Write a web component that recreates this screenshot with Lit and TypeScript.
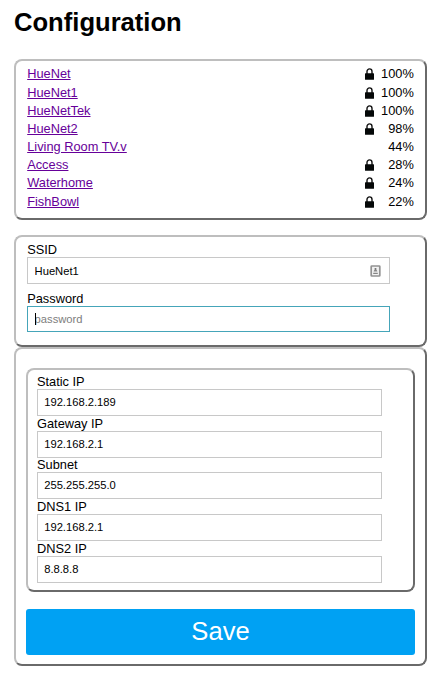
import { LitElement, html, css, svg, nothing } from "lit";
import { customElement } from "lit/decorators.js";

interface Network {
  name: string;
  locked: boolean;
  quality: number;
}

const networks: Network[] = [
  { name: "HueNet", locked: true, quality: 100 },
  { name: "HueNet1", locked: true, quality: 100 },
  { name: "HueNetTek", locked: true, quality: 100 },
  { name: "HueNet2", locked: true, quality: 98 },
  { name: "Living Room TV.v", locked: false, quality: 44 },
  { name: "Access", locked: true, quality: 28 },
  { name: "Waterhome", locked: true, quality: 24 },
  { name: "FishBowl", locked: true, quality: 22 },
];

const addresses = [
  ["Static IP", "192.168.2.189"],
  ["Gateway IP", "192.168.2.1"],
  ["Subnet", "255.255.255.0"],
  ["DNS1 IP", "192.168.2.1"],
  ["DNS2 IP", "8.8.8.8"],
];

@customElement("app-root")
export class AppRoot extends LitElement {
  static styles = css`
    :host {
      display: block;
      box-sizing: border-box;
      width: 446px;
      height: 675px;
      padding: 7px 19px 0 14px;
      background: #fff;
      color: #000;
      font: 12.8px/15px "Liberation Sans", Arial, sans-serif;
      overflow: hidden;
    }
    * {
      box-sizing: border-box;
    }
    h1 {
      margin: 0 0 22px;
      font-size: 25.6px;
      line-height: 30px;
    }
    .panel {
      border: 2px solid;
      border-color: #bebebe #6a6a6a #6a6a6a #bebebe;
      border-radius: 8px;
    }
    .networks {
      height: 161px;
      padding: 3.75px 11.2px 0 11.2px;
      margin-bottom: 15px;
    }
    .network {
      display: flex;
      align-items: center;
      height: 18.19px;
    }
    .network a {
      flex: 1;
      color: #660099;
      text-decoration: underline;
    }
    .lock {
      width: 11px;
      height: 12px;
      display: block;
      margin-top: 1px;
    }
    .quality {
      width: 39px;
      text-align: right;
    }
    .wifi {
      height: 112px;
      padding: 5px 35px 0 11px;
    }
    .wifi .field {
      height: 49px;
    }
    .field label {
      display: block;
      height: 15px;
    }
    .wifi label {
      padding-left: 0.2px;
    }
    .box {
      position: relative;
    }
    input {
      display: block;
      width: 100%;
      height: 27px;
      margin: 0;
      padding: 1px 6.6px 0;
      border: 1px solid #c8c8c8;
      border-radius: 0;
      outline: none;
      background: #fff;
      color: #000;
      font: 11.2px "Liberation Sans", Arial, sans-serif;
    }
    input::placeholder {
      color: #7d7d7d;
      opacity: 1;
    }
    .active input {
      height: 26px;
      padding: 0 6.6px 1px;
      border-color: #45a5b9;
    }
    .caret {
      position: absolute;
      left: 8px;
      top: 7px;
      width: 1px;
      height: 12px;
      background: #000;
    }
    .contact {
      position: absolute;
      right: 9px;
      top: 8px;
      width: 11px;
      height: 12px;
    }
    .static {
      height: 319px;
      padding: 19px 10px 0;
    }
    .addresses {
      height: 224px;
      padding: 4px 31px 0 9px;
      margin-bottom: 17px;
    }
    .addresses .field {
      height: 41.7px;
    }
    .addresses input {
      padding: 0 6.2px 1px;
    }
    button {
      display: block;
      width: 100%;
      height: 46px;
      padding: 0 0 2px;
      border: 0;
      border-radius: 3px;
      background: #00a1f3;
      color: #fff;
      font: 25.6px "Liberation Sans", Arial, sans-serif;
    }
  `;

  private lockIcon() {
    return svg`<svg class="lock" viewBox="0 0 11 12">
      <path d="M3 6V3.4a2.5 2.5 0 0 1 5 0V6" fill="none" stroke="#111" stroke-width="1.4"/>
      <rect x="1" y="5.2" width="9" height="6.5" rx=".5" fill="#050808"/>
    </svg>`;
  }

  render() {
    return html`
      <h1>Configuration</h1>
      <div class="panel networks">
        ${networks.map(
          (n) => html`<div class="network">
            <a>${n.name}</a>
            ${n.locked ? this.lockIcon() : nothing}
            <span class="quality">${n.quality}%</span>
          </div>`
        )}
      </div>
      <div class="panel wifi">
        <div class="field">
          <label>SSID</label>
          <div class="box">
            <input .value=${"HueNet1"} />
            <svg class="contact" viewBox="0 0 11 12">
              <rect x="1.2" y="1" width="8.6" height="10" rx=".6" fill="#f2f2f2" stroke="#929292" stroke-width="1.7"/>
              <circle cx="5.5" cy="4" r="1.1" fill="#707070"/>
              <path d="M3.6 6.6q0-1.8 1.9-1.8t1.9 1.8zM3.2 7.8h4.6v1.2H3.2z" fill="#858585"/>
            </svg>
          </div>
        </div>
        <div class="field active">
          <label>Password</label>
          <div class="box">
            <input placeholder="password" />
            <span class="caret"></span>
          </div>
        </div>
      </div>
      <div class="panel static">
        <div class="panel addresses">
          ${addresses.map(
            ([label, value]) => html`<div class="field">
              <label>${label}</label>
              <div class="box"><input .value=${value} /></div>
            </div>`
          )}
        </div>
        <button>Save</button>
      </div>
    `;
  }
}
